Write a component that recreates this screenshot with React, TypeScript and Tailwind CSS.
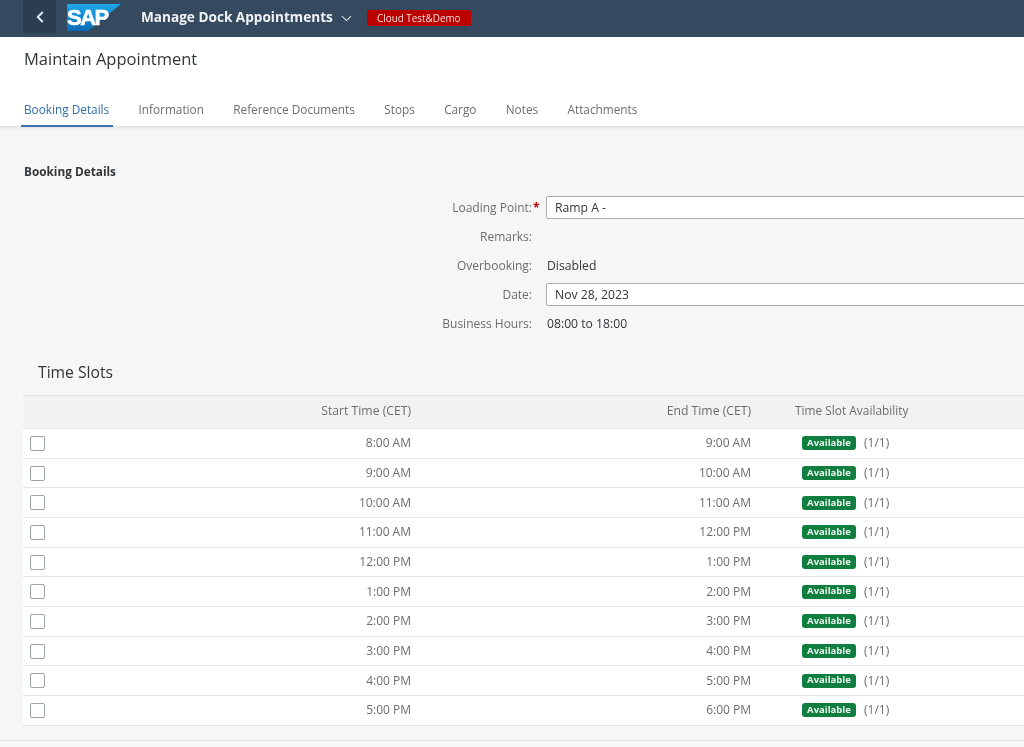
import { ChevronDown, ChevronLeft } from 'lucide-react';

const tabs = ['Booking Details', 'Information', 'Reference Documents', 'Stops', 'Cargo', 'Notes', 'Attachments'];

const slots = [
  ['8:00 AM', '9:00 AM'],
  ['9:00 AM', '10:00 AM'],
  ['10:00 AM', '11:00 AM'],
  ['11:00 AM', '12:00 PM'],
  ['12:00 PM', '1:00 PM'],
  ['1:00 PM', '2:00 PM'],
  ['2:00 PM', '3:00 PM'],
  ['3:00 PM', '4:00 PM'],
  ['4:00 PM', '5:00 PM'],
  ['5:00 PM', '6:00 PM'],
];

function SapLogo() {
  return (
    <svg width="54" height="27" viewBox="0 0 54 27" className="block">
      <defs>
        <linearGradient id="sapBlue" x1="0" y1="0" x2="0" y2="1">
          <stop offset="0" stopColor="#1fa8ea" />
          <stop offset="1" stopColor="#0a6ab8" />
        </linearGradient>
      </defs>
      <polygon points="0,0 54,0 21,27 0,27" fill="url(#sapBlue)" />
    </svg>
  );
}

function FormRow({ label, required, children }: { label: string; required?: boolean; children: React.ReactNode }) {
  return (
    <div className="flex h-[29px] items-center">
      <div className="relative w-[532px] shrink-0 text-right text-[12px] text-[#6a6d70]">
        {label}
        {required && <span className="absolute left-[533px] top-0 text-[12px] font-bold text-[#bb0000]">*</span>}
      </div>
      <div className="ml-[14px] flex-1 text-[12.2px] text-[#32363a]">{children}</div>
    </div>
  );
}

function TextBox({ value }: { value: string }) {
  return (
    <div className="flex h-[23px] w-[500px] items-center rounded-[2px] border border-[#a9adb2] bg-white pl-2 pt-px text-[12.2px] text-[#32363a]">
      {value}
    </div>
  );
}

export default function App() {
  return (
    <div className="h-[747px] w-[1024px] overflow-hidden bg-[#f6f6f6] font-['Open_Sans','Noto_Sans',sans-serif] blur-[0.5px]">
      {/* Shell bar */}
      <header className="flex h-[37px] bg-[#354a5f] pl-[23px]">
        <div className="flex h-[33px] w-[33px] items-center justify-center bg-[#2b3d50]">
          <ChevronLeft size={18} strokeWidth={2.5} className="text-[#e8ecf0]" />
        </div>
        <div className="ml-[11px] mt-[4px]">
          <div className="relative h-[27px] w-[54px]">
            <SapLogo />
            <span className="absolute left-0 top-[4px] font-['Liberation_Sans',sans-serif] text-[22px] font-bold leading-[20px] tracking-[-1.5px] text-white [-webkit-text-stroke:0.6px_white]">
              SAP
            </span>
          </div>
        </div>
        <div className="ml-[20px] mt-[8px] text-[13.6px] font-bold leading-[18px] text-[#f0f3f6]">Manage Dock Appointments</div>
        <ChevronDown size={17} strokeWidth={1.5} className="ml-[5px] mt-[10px] text-[#d5dde5]" />
        <div className="ml-[12px] mt-[10px] flex h-[16px] w-[104px] items-center justify-center rounded-[2px] bg-[#bb0000] text-[9.9px] text-[#f6dede]">
          Cloud Test&amp;Demo
        </div>
      </header>

      {/* Page header */}
      <div className="h-[90px] border-b border-[#e2e2e2] bg-white shadow-[0_1px_2px_rgba(0,0,0,0.08)]">
        <h1 className="pl-[24px] pt-[10px] text-[16.5px] font-normal leading-[24px] text-[#32363a]">Maintain Appointment</h1>
        <nav className="mt-[30px] flex gap-[29.3px] pl-[21px]">
          {tabs.map((tab, i) => (
            <div
              key={tab}
              className={
                i === 0
                  ? 'mr-[-4px] h-[26px] border-b-[2px] border-[#3b72ad] pl-[3px] pr-[4px] text-[11.8px] leading-[16px] text-[#2f6da8]'
                  : 'h-[26px] text-[11.8px] leading-[16px] text-[#6a6d70]'
              }
            >
              {tab}
            </div>
          ))}
        </nav>
      </div>

      {/* Booking details */}
      <section className="pt-[36px]">
        <h2 className="pl-[24px] text-[11.8px] font-bold leading-[16px] text-[#32363a]">Booking Details</h2>
        <div className="mt-[14px]">
          <FormRow label="Loading Point:" required>
            <TextBox value="Ramp A -" />
          </FormRow>
          <FormRow label="Remarks:">{null}</FormRow>
          <FormRow label="Overbooking:">
            <div className="pl-px pt-px">Disabled</div>
          </FormRow>
          <FormRow label="Date:">
            <TextBox value="Nov 28, 2023" />
          </FormRow>
          <FormRow label="Business Hours:">
            <div className="pl-px pt-px">08:00 to 18:00</div>
          </FormRow>
        </div>
      </section>

      {/* Time slots */}
      <section className="pl-[23px]">
        <h2 className="pl-[15px] pt-[22px] text-[15.7px] font-normal leading-[24px] text-[#32363a]">Time Slots</h2>
        <div className="mt-[11px] grid h-[34px] grid-cols-[396px_340px_1fr] items-center border-y border-[#e5e5e5] bg-[#f2f2f2] pb-[2px] text-[12.2px] text-[#6a6d70]">
          <div className="pr-2 text-right">Start Time (CET)</div>
          <div className="pr-2 text-right">End Time (CET)</div>
          <div className="pl-[36px] text-[11.9px]">Time Slot Availability</div>
        </div>
        {slots.map(([start, end]) => (
          <div
            key={start}
            className="relative grid h-[29.67px] grid-cols-[396px_340px_1fr] items-center border-b border-[#e5e5e5] bg-white text-[12px] text-[#6a6d70]"
          >
            <div className="absolute left-[7px] top-[7px] h-[15px] w-[15px] rounded-[2px] border border-[#9ea3a8] bg-white" />
            <div className="pr-2 text-right">{start}</div>
            <div className="pr-2 text-right">{end}</div>
            <div className="flex items-center pl-[43px]">
              <span className="flex h-[14px] w-[54px] items-center justify-center rounded-[3px] bg-[#107e3e] text-[9.5px] font-bold text-[#eef7f1]">
                Available
              </span>
              <span className="ml-[8px]">(1/1)</span>
            </div>
          </div>
        ))}
      </section>

      <div className="mt-[14px] h-px bg-[#e5e5e5]" />
    </div>
  );
}
